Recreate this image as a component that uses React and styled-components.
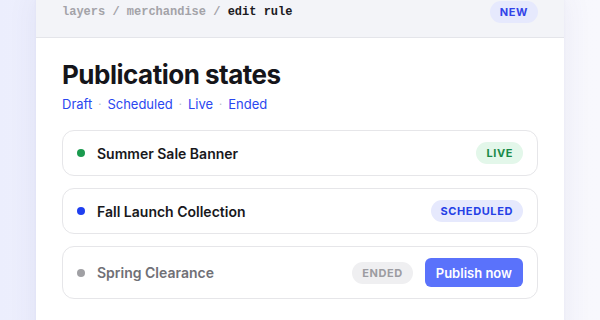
import React from 'react';
import styled, { createGlobalStyle } from 'styled-components';

const GlobalStyle = createGlobalStyle`
  html, body {
    margin: 0;
    padding: 0;
    height: 100%;
    overflow: hidden;
  }
  body {
    background: linear-gradient(90deg, #eceefd 0%, #f3f4fd 40%, #f8f8fd 100%);
    font-family: Inter, 'Noto Sans', sans-serif;
  }
`;

const Page = styled.div`
  display: flex;
  justify-content: center;
  padding: 0 36px;
`;

const Card = styled.div`
  width: 528px;
  margin-top: -13px;
  background: #fff;
  border-radius: 0 0 14px 14px;
  box-shadow: 0 8px 30px rgba(60, 70, 140, 0.08), 0 1px 3px rgba(60, 70, 140, 0.05);
  overflow: hidden;
`;

const Header = styled.div`
  display: flex;
  align-items: center;
  justify-content: space-between;
  height: 51px;
  box-sizing: border-box;
  padding: 0 26px 1px;
  background: #f3f4f8;
  border-bottom: 1px solid #e4e5ea;
`;

const Crumbs = styled.div`
  font-family: 'Liberation Mono', 'DejaVu Sans Mono', monospace;
  font-size: 12px;
  font-weight: 700;
  color: #a3a3a8;
  padding-top: 1px;
`;

const Current = styled.span`
  color: #1b1b1f;
`;

const Pill = styled.span`
  display: inline-flex;
  align-items: center;
  height: 22px;
  padding: 0 10px;
  border-radius: 11px;
  font-size: 11px;
  font-weight: 700;
  letter-spacing: 0.6px;
  color: ${(p) => p.$fg};
  background: ${(p) => p.$bg};
`;

const Body = styled.div`
  padding: 21px 26px 60px;
`;

const Title = styled.h1`
  margin: 0;
  font-size: 26px;
  line-height: 32px;
  font-weight: 700;
  letter-spacing: -0.5px;
  color: #15151a;
`;

const Tabs = styled.div`
  display: flex;
  align-items: center;
  gap: 6px;
  margin-top: 4px;
  font-size: 13px;
  line-height: 18px;
`;

const Tab = styled.a`
  color: #2a47f0;
  text-decoration: none;
`;

const Sep = styled.span`
  color: #b9bcc7;
  font-size: 11px;
`;

const List = styled.div`
  display: flex;
  flex-direction: column;
  gap: 12px;
  margin-top: 17px;
`;

const Row = styled.div`
  display: flex;
  align-items: center;
  gap: 12px;
  min-height: 46px;
  padding: ${(p) => (p.$tall ? '11px 14px' : '0 14px')};
  box-sizing: border-box;
  border: 1px solid #e6e6e9;
  border-radius: 12px;
`;

const Dot = styled.span`
  width: 8px;
  height: 8px;
  border-radius: 50%;
  background: ${(p) => p.$color};
  flex-shrink: 0;
`;

const Name = styled.span`
  flex: 1;
  font-size: 14px;
  font-weight: 600;
  color: ${(p) => (p.$muted ? '#707076' : '#18181c')};
`;

const Actions = styled.div`
  display: flex;
  align-items: center;
  gap: 12px;
`;

const Button = styled.button`
  height: 29px;
  padding: 0 11px;
  border: none;
  border-radius: 6px;
  background: #5a72fb;
  color: #fff;
  font-family: Inter, sans-serif;
  font-size: 13px;
  font-weight: 600;
`;

const App = () => (
  <>
    <GlobalStyle />
    <Page>
      <Card>
        <Header>
          <Crumbs>
            layers / merchandise / <Current>edit rule</Current>
          </Crumbs>
          <Pill $fg="#3344e8" $bg="#e6e9fd">NEW</Pill>
        </Header>
        <Body>
          <Title>Publication states</Title>
          <Tabs>
            <Tab>Draft</Tab>
            <Sep>·</Sep>
            <Tab>Scheduled</Tab>
            <Sep>·</Sep>
            <Tab>Live</Tab>
            <Sep>·</Sep>
            <Tab>Ended</Tab>
          </Tabs>
          <List>
            <Row>
              <Dot $color="#1a9a4e" />
              <Name>Summer Sale Banner</Name>
              <Pill $fg="#1a8a48" $bg="#e3f7ea">LIVE</Pill>
            </Row>
            <Row>
              <Dot $color="#1f3ff0" />
              <Name>Fall Launch Collection</Name>
              <Pill $fg="#2440e6" $bg="#e6e9fd">SCHEDULED</Pill>
            </Row>
            <Row $tall>
              <Dot $color="#a0a0a4" />
              <Name $muted>Spring Clearance</Name>
              <Actions>
                <Pill $fg="#9c9ca1" $bg="#efeff1">ENDED</Pill>
                <Button>Publish now</Button>
              </Actions>
            </Row>
          </List>
        </Body>
      </Card>
    </Page>
  </>
);

export default App;
